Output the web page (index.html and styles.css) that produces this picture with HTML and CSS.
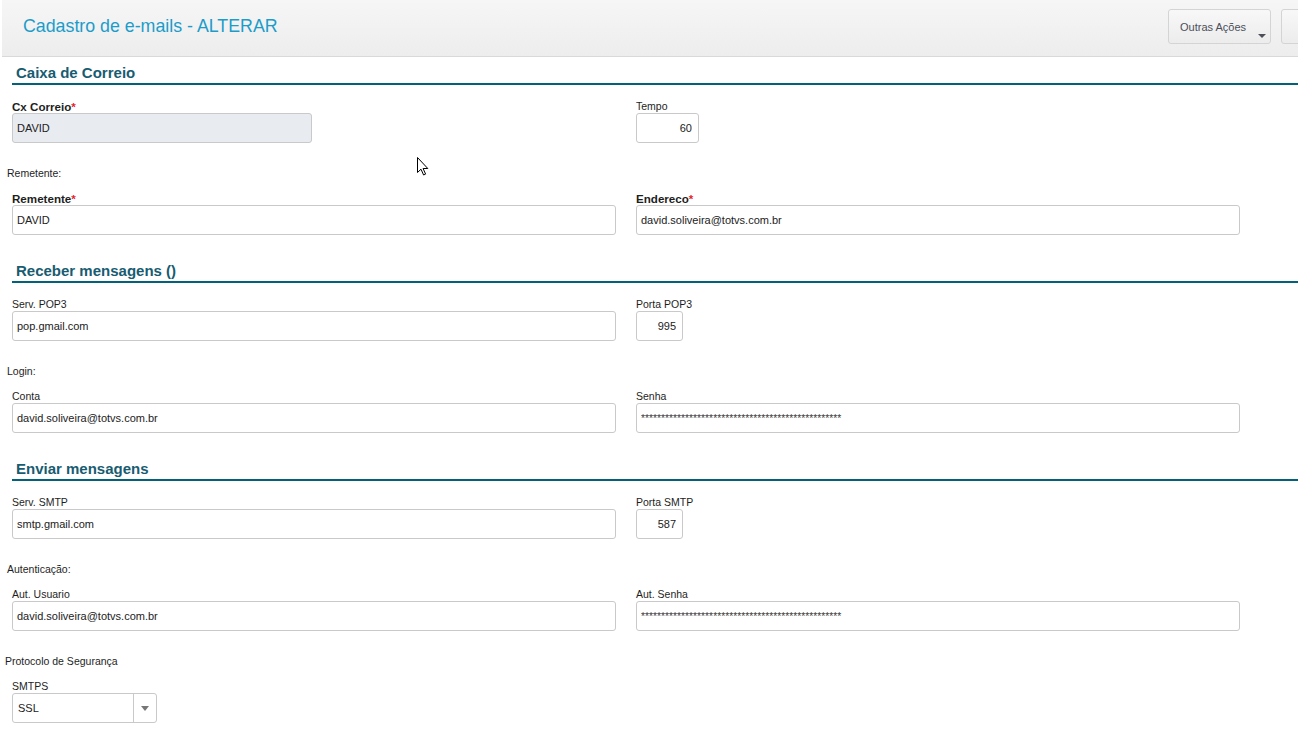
FILE: index.html
```html
<!DOCTYPE html>
<html lang="pt-BR">
<head>
<meta charset="utf-8">
<title>Cadastro de e-mails - ALTERAR</title>
<link rel="stylesheet" href="styles.css">
</head>
<body>
<header class="topbar">
  <h1 class="page-title">Cadastro de e-mails - ALTERAR</h1>
  <div class="actions">
    <button class="btn btn-menu" type="button">Outras Ações<span class="caret"></span></button>
    <button class="btn btn-next" type="button"></button>
  </div>
</header>

<main class="form">
  <section class="group">
    <h2 class="group-title">Caixa de Correio</h2>
    <div class="row">
      <div class="field">
        <label class="lbl lbl-req">Cx Correio<span class="req">*</span></label>
        <input class="ctl ctl-w300 ctl-disabled" type="text" value="DAVID" readonly>
      </div>
      <div class="field">
        <label class="lbl">Tempo</label>
        <input class="ctl ctl-w63 ctl-num" type="text" value="60" readonly>
      </div>
    </div>
    <p class="sublabel">Remetente:</p>
    <div class="row">
      <div class="field">
        <label class="lbl lbl-req">Remetente<span class="req">*</span></label>
        <input class="ctl" type="text" value="DAVID" readonly>
      </div>
      <div class="field">
        <label class="lbl lbl-req">Endereco<span class="req">*</span></label>
        <input class="ctl" type="text" value="david.soliveira@totvs.com.br" readonly>
      </div>
    </div>
  </section>

  <section class="group">
    <h2 class="group-title">Receber mensagens ()</h2>
    <div class="row">
      <div class="field">
        <label class="lbl">Serv. POP3</label>
        <input class="ctl" type="text" value="pop.gmail.com" readonly>
      </div>
      <div class="field">
        <label class="lbl">Porta POP3</label>
        <input class="ctl ctl-w47 ctl-num" type="text" value="995" readonly>
      </div>
    </div>
    <p class="sublabel">Login:</p>
    <div class="row">
      <div class="field">
        <label class="lbl">Conta</label>
        <input class="ctl" type="text" value="david.soliveira@totvs.com.br" readonly>
      </div>
      <div class="field">
        <label class="lbl">Senha</label>
        <input class="ctl ctl-secret" type="text" value="**************************************************" readonly>
      </div>
    </div>
  </section>

  <section class="group">
    <h2 class="group-title">Enviar mensagens</h2>
    <div class="row">
      <div class="field">
        <label class="lbl">Serv. SMTP</label>
        <input class="ctl" type="text" value="smtp.gmail.com" readonly>
      </div>
      <div class="field">
        <label class="lbl">Porta SMTP</label>
        <input class="ctl ctl-w47 ctl-num" type="text" value="587" readonly>
      </div>
    </div>
    <p class="sublabel">Autenticação:</p>
    <div class="row">
      <div class="field">
        <label class="lbl">Aut. Usuario</label>
        <input class="ctl" type="text" value="david.soliveira@totvs.com.br" readonly>
      </div>
      <div class="field">
        <label class="lbl">Aut. Senha</label>
        <input class="ctl ctl-secret" type="text" value="**************************************************" readonly>
      </div>
    </div>
    <p class="sublabel sublabel-tight">Protocolo de Segurança</p>
    <div class="row">
      <div class="field">
        <label class="lbl">SMTPS</label>
        <div class="select">
          <span class="select-value">SSL</span>
          <span class="select-btn"><span class="select-caret"></span></span>
        </div>
      </div>
    </div>
  </section>
</main>

<svg class="cursor" width="12" height="19" viewBox="0 0 12 19" aria-hidden="true">
  <path d="M0.5 0.5 L0.5 15.5 L4 12.2 L6.6 18 L8.6 17.1 L6.1 11.5 L10.8 11.5 Z" fill="#fff" stroke="#000" stroke-width="1" stroke-linejoin="miter"/>
</svg>
</body>
</html>
```

FILE: styles.css
```css
html, body {
  margin: 0;
  padding: 0;
  background: #fff;
}

body {
  font-family: "Liberation Sans", Arial, sans-serif;
  font-size: 11px;
  color: #222;
  width: 1298px;
  height: 738px;
  overflow: hidden;
  position: relative;
}

/* top bar */
.topbar {
  height: 56px;
  margin-left: 2px;
  border-bottom: 1px solid #d9d9d9;
  background: linear-gradient(#f6f6f6, #ededee);
  display: flex;
  align-items: flex-start;
  justify-content: space-between;
}

.page-title {
  margin: 15px 0 0 21px;
  font-size: 17.8px;
  line-height: 22px;
  font-weight: normal;
  color: #1c9cc9;
}

.actions {
  display: flex;
  gap: 10px;
  margin-top: 9px;
  margin-right: -29px;
}

.btn {
  height: 35px;
  border: 1px solid #d4d4d4;
  border-radius: 3px;
  background: linear-gradient(#f8f8f8, #ececec);
  font-family: "Liberation Sans", Arial, sans-serif;
  font-size: 11px;
  color: #4a4f5a;
  padding: 0;
  position: relative;
}

.btn-menu {
  width: 103px;
  text-align: left;
  padding: 0 0 0 11px;
}

.btn-next {
  width: 46px;
}

.caret {
  position: absolute;
  right: 4px;
  bottom: 5px;
  width: 0;
  height: 0;
  border-left: 4px solid transparent;
  border-right: 4px solid transparent;
  border-top: 4px solid #4d5058;
}

/* form body */
.form {
  display: block;
}

.group-title {
  margin: 26px 0 0 12px;
  padding-left: 4px;
  height: 20px;
  line-height: 20px;
  font-size: 15px;
  font-weight: bold;
  color: #185c71;
  border-bottom: 2px solid #03627a;
}

.group:first-child .group-title {
  margin-top: 6px;
}

.group-title + .row {
  margin-top: 15px;
}

.row {
  display: grid;
  grid-template-columns: 604px 604px;
  column-gap: 20px;
  margin-left: 12px;
}

.field {
  display: flex;
  flex-direction: column;
  align-items: flex-start;
}

.lbl {
  display: block;
  height: 13px;
  line-height: 13px;
  font-size: 10.5px;
  color: #1e1e1e;
}

.lbl-req {
  font-weight: bold;
  font-size: 11.6px;
}

.req {
  color: #e8232a;
}

.sublabel {
  margin: 24px 0 12px 7px;
  line-height: 13px;
  font-size: 10.5px;
  color: #1e1e1e;
}

.sublabel-tight {
  margin-left: 5px;
}

.ctl {
  box-sizing: border-box;
  width: 604px;
  height: 30px;
  margin: 0;
  padding: 0 5px 0 4px;
  border: 1px solid #c9c9c9;
  border-radius: 3px;
  background: #fff;
  font-family: "Liberation Sans", Arial, sans-serif;
  font-size: 11px;
  color: #222;
  outline: none;
}

.ctl-disabled {
  background: #e8ebf0;
}

.ctl-w300 { width: 300px; }
.ctl-w63 { width: 63px; }
.ctl-w47 { width: 47px; }

.ctl-num {
  text-align: right;
  padding-right: 6px;
}

.ctl-secret {
  font-size: 10.3px;
  color: #3a3a3a;
}

/* combo box */
.select {
  box-sizing: border-box;
  width: 145px;
  height: 30px;
  border: 1px solid #c9c9c9;
  border-radius: 3px;
  display: flex;
  align-items: center;
  background: #fff;
}

.select-value {
  flex: 1;
  padding-left: 5px;
  color: #222;
}

.select-btn {
  width: 22px;
  height: 28px;
  border-left: 1px solid #c9c9c9;
  display: flex;
  align-items: center;
  justify-content: center;
}

.select-caret {
  width: 0;
  height: 0;
  border-left: 4px solid transparent;
  border-right: 4px solid transparent;
  border-top: 5px solid #777;
}

/* pointer on top of the form */
.cursor {
  position: absolute;
  left: 417px;
  top: 157px;
}
```
